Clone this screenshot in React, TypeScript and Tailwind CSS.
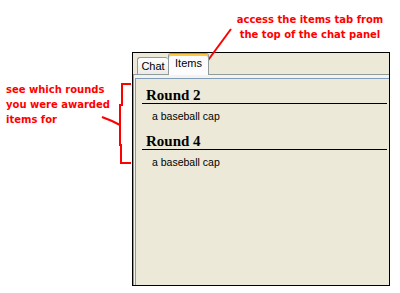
import React from "react"

const serif = { fontFamily: '"Liberation Serif", "Times New Roman", serif' }
const sans = { fontFamily: '"Liberation Sans", Arial, sans-serif' }
const note = { fontFamily: '"DejaVu Sans", Verdana, sans-serif' }

const rounds = [
  { title: "Round 2", items: ["a baseball cap"] },
  { title: "Round 4", items: ["a baseball cap"] },
]

function ItemsPanel() {
  return (
    <div className="ml-[132px] mt-[52px] flex h-[234px] w-[258px] flex-col overflow-hidden border border-black bg-[#ece9d8]" style={sans}>
      {/* tab strip */}
      <div className="flex h-[21px] items-end pl-[4px] text-[11px] text-black">
        <div className="h-[17px] w-[31px] rounded-t-[3px] border-t border-l border-[#919b9c] bg-linear-to-b from-white to-[#ecebe6] text-center leading-[16px]">
          Chat
        </div>
        <div className="relative z-10 -mb-px h-[22px] w-[41px] rounded-t-[3px] border-t border-r border-l border-[#919b9c] border-t-[#e68b2c] bg-[#fcfcfe] pt-[2px] text-center leading-[14px] shadow-[inset_0_2px_0_#ffc73c]">
          Items
        </div>
      </div>

      {/* tab pane */}
      <div className="flex flex-1 flex-col border-t border-l border-[#919b9c] bg-[#f4f3ee] pt-[3px] pl-[1px]">
        <div className="flex-1 border-t border-l border-[#7f9db9] bg-[#ece9d8] pt-[8px] pr-[2px] pl-[6px]">
          {rounds.map((r, i) => (
            <div key={r.title} className={i > 0 ? "mt-[10px]" : ""}>
              <div className="border-b border-black pl-[4px] text-[15px] leading-[16px] font-bold text-black" style={serif}>
                {r.title}
              </div>
              {r.items.map((it) => (
                <div key={it} className="mt-[5px] pl-[10px] text-[10.5px] leading-[14px] text-black">
                  {it}
                </div>
              ))}
            </div>
          ))}
        </div>
      </div>
    </div>
  )
}

export default function App() {
  return (
    <div className="relative h-[293px] w-[400px] overflow-hidden bg-white">
      <ItemsPanel />

      {/* annotations */}
      <div className="absolute top-[12px] left-[230px] w-[160px] text-center text-[10px] leading-[15px] font-bold text-[#f00]" style={note}>
        access the items tab from
        <br />
        the top of the chat panel
      </div>
      <div className="absolute top-[82px] left-[6px] text-[10px] leading-[15px] font-bold text-[#f00]" style={note}>
        see which rounds
        <br />
        you were awarded
        <br />
        items for
      </div>

      <svg className="pointer-events-none absolute inset-0" width="400" height="293">
        <g stroke="#f00" strokeWidth="2" fill="none">
          <path d="M231 29 L206 63" />
          <path d="M131 84 H122 V105 H120 V145 H121 V163 H131" />
          <path d="M102 117 L112 121 L120 125" />
        </g>
      </svg>
    </div>
  )
}
